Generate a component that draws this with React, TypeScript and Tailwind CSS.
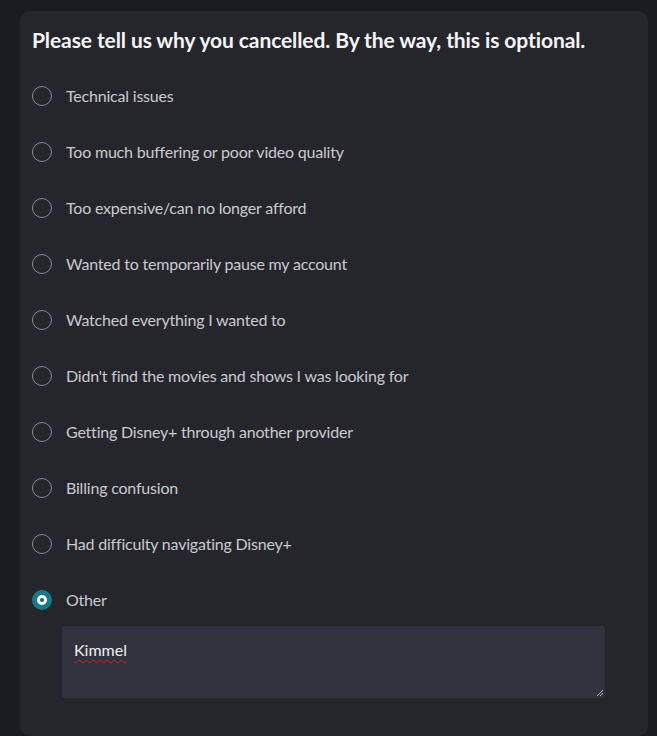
import React from "react";

const options = [
  "Technical issues",
  "Too much buffering or poor video quality",
  "Too expensive/can no longer afford",
  "Wanted to temporarily pause my account",
  "Watched everything I wanted to",
  "Didn't find the movies and shows I was looking for",
  "Getting Disney+ through another provider",
  "Billing confusion",
  "Had difficulty navigating Disney+",
];

export default function App() {
  return (
    <div
      className="min-h-[736px] w-[657px] bg-[#1b1c21] pt-[11px] pl-[20px] pr-[9px] pb-[5px]"
      style={{ fontFamily: "Lato, 'Noto Sans', sans-serif" }}
    >
      <div className="rounded-[10px] bg-[#25262c] pl-[12px] pr-[43px] pt-[16px] pb-[38px]">
        <h1 className="text-[21px] font-bold leading-[26px] tracking-[-0.1px] text-[#f5f5f7]">
          Please tell us why you cancelled. By the way, this is optional.
        </h1>
        <div className="mt-[15px] flex flex-col">
          {options.map((o) => (
            <div key={o} className="flex h-[56px] items-center gap-[14px]">
              <div className="h-[20px] w-[20px] rounded-full border-[1.5px] border-[#8a8b92]" />
              <span className="text-[16px] tracking-[-0.2px] text-[#c9cacf]">{o}</span>
            </div>
          ))}
          <div className="flex h-[56px] items-center gap-[14px]">
            <div className="flex h-[20px] w-[20px] items-center justify-center rounded-full bg-[#147b88]">
              <div className="flex h-[10px] w-[10px] items-center justify-center rounded-full bg-white">
                <div className="h-[4px] w-[4px] rounded-full bg-[#0f5e69]" />
              </div>
            </div>
            <span className="text-[16px] tracking-[-0.2px] text-[#c9cacf]">Other</span>
          </div>
          <div className="mt-[-2px] pl-[30px]">
            <div className="relative h-[72px] rounded-[3px] bg-[#30333e] px-[12px] pt-[12px]">
              <span className="text-[16px] text-[#f0f0f2] underline decoration-wavy decoration-[#d0202a] underline-offset-[3px] decoration-[1px]">
                Kimmel
              </span>
              <svg className="absolute bottom-[1px] right-[1px]" width="9" height="9" viewBox="0 0 9 9">
                <path d="M8 2 L2 8 M8 5 L5 8" stroke="#b8b8bc" strokeWidth="1" />
              </svg>
            </div>
          </div>
        </div>
      </div>
    </div>
  );
}
